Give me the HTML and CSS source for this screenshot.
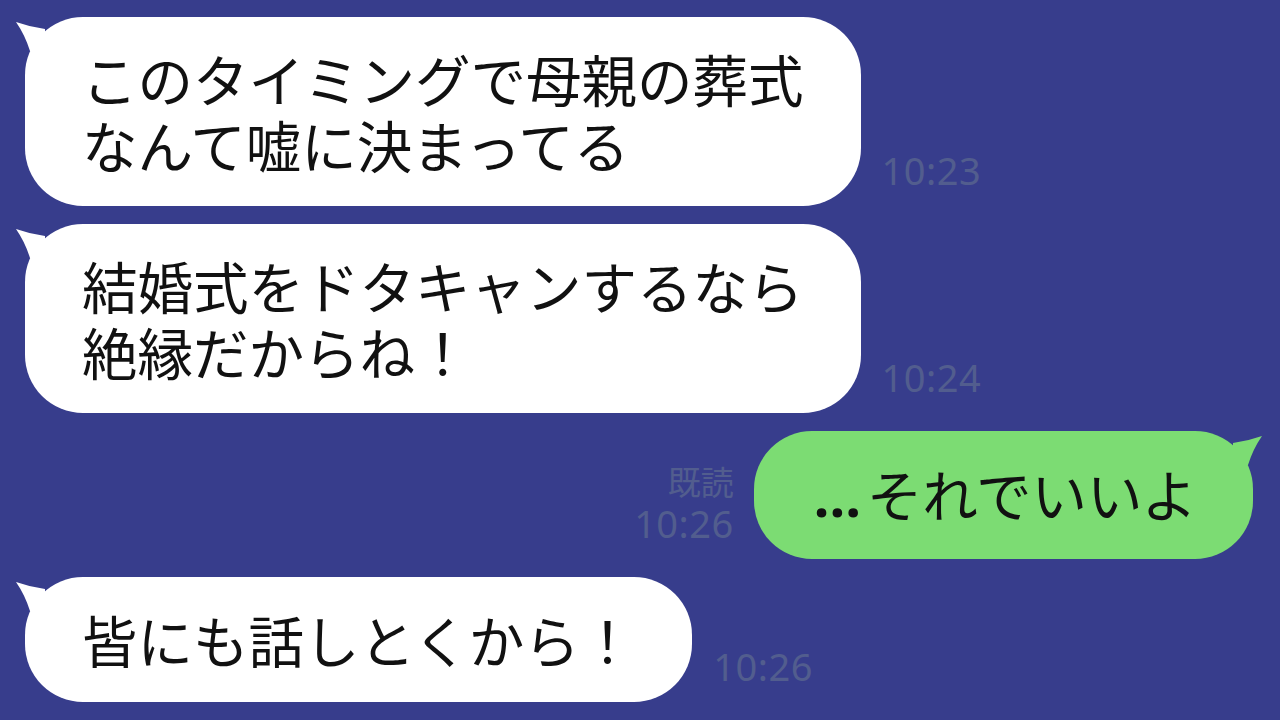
FILE: index.html
```html
<!DOCTYPE html>
<html lang="ja">
<head>
  <meta charset="UTF-8" />
  <title>トーク</title>
  <link rel="stylesheet" href="styles.css">
</head>
<body>
  <div class="talk">
    <!-- 相手のメッセージ -->
    <div class="row left">
      <div class="bubble white">
        <svg class="tail" viewBox="-12 0 40 50" width="40" height="50"><path d="M-9 5 Q5 10 20 12 L20 40 L5 34 Q0 18 -9 5 Z"/></svg>
        このタイミングで母親の葬式<br>なんて嘘に決まってる
      </div>
      <div class="meta"><span class="time">10:23</span></div>
    </div>

    <div class="row left">
      <div class="bubble white">
        <svg class="tail" viewBox="-12 0 40 50" width="40" height="50"><path d="M-9 5 Q5 10 20 12 L20 40 L5 34 Q0 18 -9 5 Z"/></svg>
        結婚式をドタキャンするなら<br>絶縁だからね！
      </div>
      <div class="meta"><span class="time">10:24</span></div>
    </div>

    <!-- 自分のメッセージ -->
    <div class="row right">
      <div class="meta">
        <span class="read">既読</span>
        <span class="time">10:26</span>
      </div>
      <div class="bubble green single">
        <svg class="tail" viewBox="-12 0 40 50" width="40" height="50"><path d="M-9 5 Q5 10 20 12 L20 40 L5 34 Q0 18 -9 5 Z"/></svg>
        <span class="dots">…</span>それでいいよ
      </div>
    </div>

    <div class="row left">
      <div class="bubble white single">
        <svg class="tail" viewBox="-12 0 40 50" width="40" height="50"><path d="M-9 5 Q5 10 20 12 L20 40 L5 34 Q0 18 -9 5 Z"/></svg>
        皆にも話しとくから！
      </div>
      <div class="meta"><span class="time">10:26</span></div>
    </div>
  </div>
</body>
</html>
```

FILE: styles.css
```css
body {
  margin: 0;
  background: #373d8c;
  font-family: "Noto Sans CJK JP", "Noto Sans", sans-serif;
  width: 1280px;
  height: 720px;
  overflow: hidden;
}
.talk {
  display: flex;
  flex-direction: column;
  gap: 18px;
  padding-top: 17px;
}
.row {
  display: flex;
  align-items: flex-end;
  gap: 21px;
}
.row.left {
  padding-left: 25px;
}
.row.right {
  justify-content: flex-end;
  padding-right: 27px;
  gap: 20px;
}

/* 吹き出し */
.bubble {
  position: relative;
  font-size: 55.5px;
  line-height: 66px;
  color: #111;
  padding: 28px 57px 29px;
  border-radius: 58px;
  white-space: nowrap;
}
.bubble.single {
  padding-top: 29px;
  padding-bottom: 30px;
}
.bubble.white {
  background: #fff;
}
.bubble.white .tail {
  fill: #fff;
}
.bubble.green {
  background: #7cdc73;
  padding-left: 60px;
  padding-right: 56px;
}
.bubble.green .tail {
  fill: #7cdc73;
  left: auto;
  right: -12px;
  transform: scaleX(-1);
}
.tail {
  position: absolute;
  left: -12px;
  top: 0;
}
.dots {
  font-family: "Noto Sans", sans-serif;
  font-weight: bold;
  display: inline-block;
  width: 53px;
}

/* 時刻・既読 */
.meta {
  display: flex;
  flex-direction: column;
  align-items: flex-end;
  color: #525d8e;
  padding-bottom: 15px;
}
.time {
  font-family: "Noto Sans", sans-serif;
  font-size: 38px;
  line-height: 42px;
  letter-spacing: 0.5px;
}
.read {
  font-size: 33px;
  line-height: 42px;
}
```
